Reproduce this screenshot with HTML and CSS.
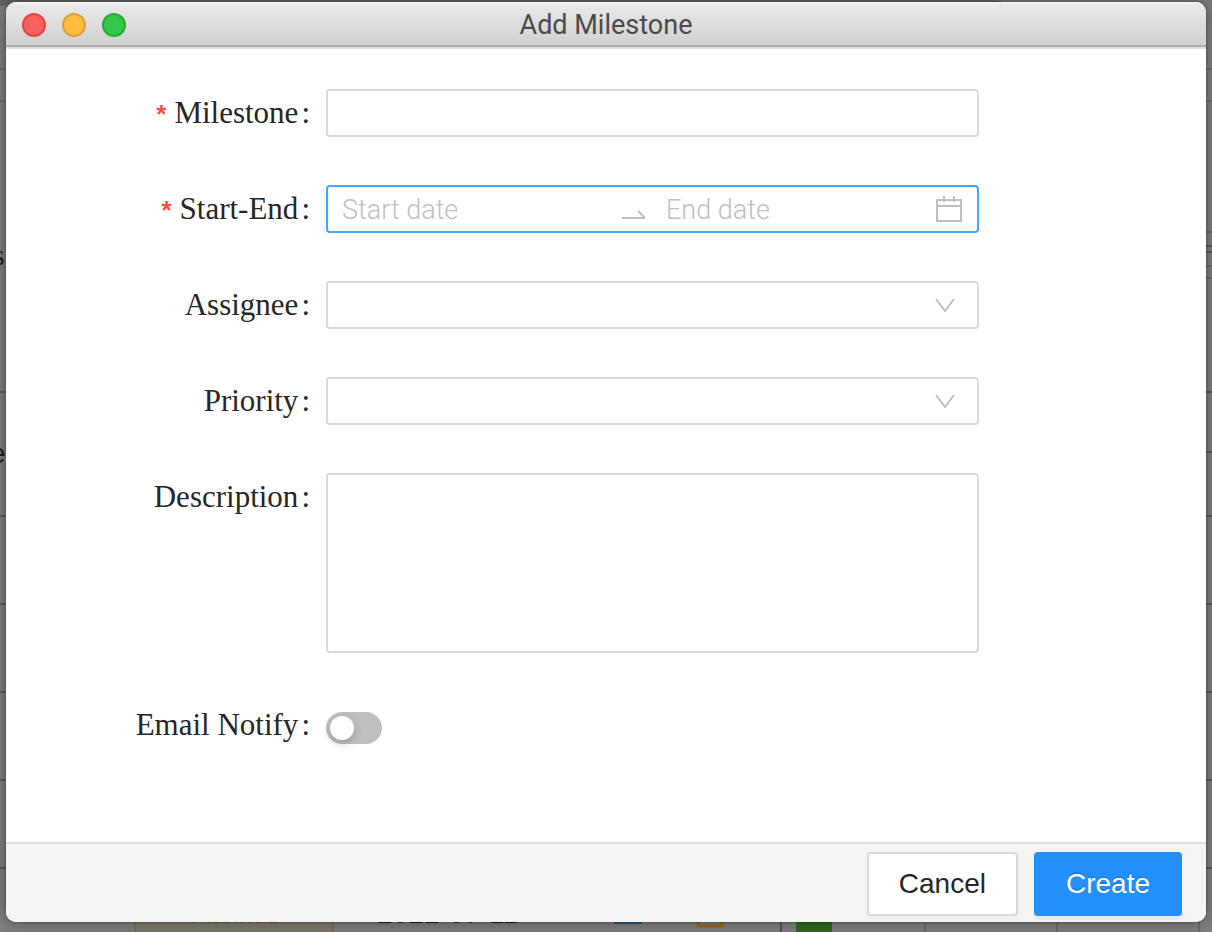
FILE: index.html
```html
<!DOCTYPE html>
<html lang="en">
<head>
<meta charset="utf-8">
<meta name="viewport" content="width=device-width, initial-scale=1">
<title>Add Milestone</title>
<link rel="stylesheet" href="styles.css">
</head>
<body>
<svg class="backdrop" viewBox="0 0 1212 932" preserveAspectRatio="none" aria-hidden="true">
  <path d="M0 0H995Q1002 0 1005 6H0Z" fill="#666"/>
  <g stroke="#6c6c6c" stroke-width="2">
    <path d="M0 69H1212M0 101H1212M1100 232H1212M1100 266H1212M1100 278H1212M925 900V932M1057 900V932M1199 900V932"/>
  </g>
  <g stroke="#5c5c5c" stroke-width="2">
    <path d="M0 392H1212M1100 452H1212M0 516H1212M0 604H1212M0 692H1212M0 780H1212M0 868H1212M1100 246H1212M1100 252H1212"/>
  </g>
  <path d="M781 900V932" stroke="#555" stroke-width="2"/>
  <rect x="135" y="880" width="198" height="60" fill="#807b70" stroke="#80703f" stroke-width="2"/>
  <rect x="614" y="890" width="28" height="34" fill="#285f80"/>
  <rect x="698" y="900" width="24" height="26" fill="none" stroke="#966820" stroke-width="3"/>
  <rect x="796" y="900" width="36" height="32" fill="#306a20"/>
  <g class="backdrop-text">
    <text class="serif" x="-7" y="265">s</text>
    <text x="-10" y="463">e</text>
    <text class="tag" x="191" y="923">Planned</text>
    <text x="377" y="923">2021-07-11</text>
  </g>
</svg>
<main class="window">
  <header class="titlebar">
    <div class="lights">
      <button class="light close" type="button" aria-label="Close"></button>
      <button class="light minimize" type="button" aria-label="Minimize"></button>
      <button class="light maximize" type="button" aria-label="Zoom"></button>
    </div>
    <h1 class="title">Add Milestone</h1>
  </header>
  <form class="form">
    <div class="fields">
      <div class="row">
        <label class="label" for="milestone"><span class="required">*</span>Milestone<span class="colon">:</span></label>
        <input class="control" id="milestone" type="text">
      </div>
      <div class="row">
        <label class="label" for="start"><span class="required">*</span>Start-End<span class="colon">:</span></label>
        <div class="control range">
          <input class="date" id="start" type="text" placeholder="Start date">
          <svg class="arrow" viewBox="0 0 24 12" aria-hidden="true"><path d="M0 9H23M23 9L16 2" fill="none" stroke="#bfbfbf" stroke-width="2"/></svg>
          <input class="date" type="text" placeholder="End date" aria-label="End date">
          <svg class="calendar" viewBox="0 0 26 26" aria-hidden="true"><path d="M1 4H25V25H1ZM1 10H25M8 0V6M18 0V6" fill="none" stroke="#bfbfbf" stroke-width="2"/></svg>
        </div>
      </div>
      <div class="row">
        <label class="label" for="assignee">Assignee<span class="colon">:</span></label>
        <div class="picker">
          <select class="control" id="assignee"></select>
          <svg class="chevron" viewBox="0 0 20 14" aria-hidden="true"><path d="M1 1L10 13L19 1" fill="none" stroke="#bfbfbf" stroke-width="2"/></svg>
        </div>
      </div>
      <div class="row">
        <label class="label" for="priority">Priority<span class="colon">:</span></label>
        <div class="picker">
          <select class="control" id="priority"></select>
          <svg class="chevron" viewBox="0 0 20 14" aria-hidden="true"><path d="M1 1L10 13L19 1" fill="none" stroke="#bfbfbf" stroke-width="2"/></svg>
        </div>
      </div>
      <div class="row">
        <label class="label" for="description">Description<span class="colon">:</span></label>
        <textarea class="control area" id="description"></textarea>
      </div>
      <div class="row">
        <label class="label" for="notify">Email Notify<span class="colon">:</span></label>
        <input class="switch" id="notify" type="checkbox" role="switch">
      </div>
    </div>
    <footer class="footer">
      <button class="button" type="button">Cancel</button>
      <button class="button primary" type="submit">Create</button>
    </footer>
  </form>
</main>
</body>
</html>
```
FILE: styles.css
```css
* {
  box-sizing: border-box;
}

body {
  margin: 0;
  min-height: 100vh;
  padding: 2px 6px 10px;
  display: flex;
  background: #7f7f7f;
  overflow: hidden;
  font-family: "Liberation Sans", sans-serif;
}

.backdrop {
  position: absolute;
  inset: 0;
  width: 100%;
  height: 100%;
}

.backdrop-text {
  font: 400 28px "Liberation Sans", sans-serif;
  fill: #1c1c1c;
}

.backdrop-text .serif {
  font-family: "Liberation Serif", serif;
  font-size: 30px;
}

.backdrop-text .tag {
  font-size: 24px;
  fill: #805a1c;
}

.window {
  position: relative;
  flex: 1;
  display: flex;
  flex-direction: column;
  background: #fff;
  border-radius: 10px;
  box-shadow: 0 0 2px rgba(0, 0, 0, 0.4), 0 0 16px rgba(0, 0, 0, 0.4);
}

.titlebar {
  flex: none;
  display: grid;
  grid-template-columns: 1fr auto 1fr;
  align-items: center;
  height: 45px;
  margin-bottom: 2px;
  padding-top: 2px;
  border-bottom: 2px solid #aeaeae;
  border-radius: 10px 10px 0 0;
  background: linear-gradient(#f6f6f6, #e8e8e8 4px, #d1d1d1);
  box-shadow: 0 2px #e0e1e6;
}

.lights {
  display: flex;
  gap: 16px;
  padding-left: 16px;
}

.light {
  width: 24px;
  height: 24px;
  padding: 0;
  border: 2px solid;
  border-radius: 50%;
}

.close {
  background: #fc605b;
  border-color: #df4744;
}

.minimize {
  background: #fdbc40;
  border-color: #de9f34;
}

.maximize {
  background: #34c84a;
  border-color: #27aa35;
}

.title {
  margin: 0;
  font: 400 27px/32px Roboto, sans-serif;
  color: #4b4b4b;
}

.form {
  flex: 1;
  display: flex;
  flex-direction: column;
}

.fields {
  flex: 1;
  padding: 40px 0;
  display: flex;
  flex-direction: column;
  gap: 48px;
}

.row {
  display: grid;
  grid-template-columns: 320fr 653fr 227fr;
  align-items: start;
}

.label {
  padding-right: 16px;
  text-align: right;
  white-space: nowrap;
  font: 400 31px/48px "Liberation Serif", serif;
  color: #262626;
}

.required {
  margin-right: 8px;
  font: 700 26px/26px "Liberation Sans", sans-serif;
  color: #ff4d4f;
}

.colon {
  margin-left: 3px;
}

.control {
  width: 100%;
  min-width: 0;
  height: 48px;
  margin: 0;
  padding: 0 14px;
  border: 2px solid #d9d9d9;
  border-radius: 4px;
  background: #fff;
  color: #262626;
  font: 300 27px/32px Roboto, sans-serif;
  outline: 0;
  appearance: none;
}

.range {
  display: flex;
  align-items: center;
  padding-right: 15px;
  border-color: #40a9ff;
}

.date {
  flex: 1;
  min-width: 0;
  height: 32px;
  margin-top: 2px;
  padding: 0;
  border: 0;
  outline: 0;
  background: none;
  color: #262626;
  font: inherit;
}

.date::placeholder {
  color: #bfbfbf;
  opacity: 1;
}

.arrow {
  width: 24px;
  height: 12px;
  margin: 12px 20px 0 10px;
}

.calendar {
  width: 26px;
  height: 26px;
}

.picker {
  display: grid;
  align-items: center;
}

.picker > * {
  grid-area: 1 / 1;
}

.chevron {
  width: 20px;
  height: 14px;
  margin-right: 24px;
  justify-self: end;
  pointer-events: none;
}

.area {
  display: block;
  height: 180px;
  padding: 8px 14px;
  resize: none;
}

.switch {
  appearance: none;
  width: 56px;
  height: 32px;
  margin: 11px 0 0;
  padding: 4px;
  border-radius: 16px;
  background: #bfbfbf;
}

.switch::before {
  content: "";
  display: block;
  width: 24px;
  height: 24px;
  border-radius: 50%;
  background: #fff;
  box-shadow: 0 4px 8px rgba(0, 35, 11, 0.2);
}

.switch:checked {
  background: #1890ff;
}

.switch:checked::before {
  margin-left: 24px;
}

.footer {
  display: flex;
  justify-content: flex-end;
  gap: 16px;
  padding: 8px 24px 6px;
  border-top: 2px solid #dcdfe6;
  border-radius: 0 0 10px 10px;
  background: #f4f4f4;
}

.button {
  height: 64px;
  padding: 0 30px;
  border: 2px solid #d9d9d9;
  border-radius: 4px;
  background: #fff;
  color: #262626;
  font: 400 28px/32px "Liberation Sans", sans-serif;
  box-shadow: 0 4px rgba(0, 0, 0, 0.016);
}

.primary {
  border-color: #2490fb;
  background: #2490fb;
  color: #fff;
  text-shadow: 0 -2px rgba(0, 0, 0, 0.12);
  box-shadow: 0 4px rgba(0, 0, 0, 0.045);
}
```
